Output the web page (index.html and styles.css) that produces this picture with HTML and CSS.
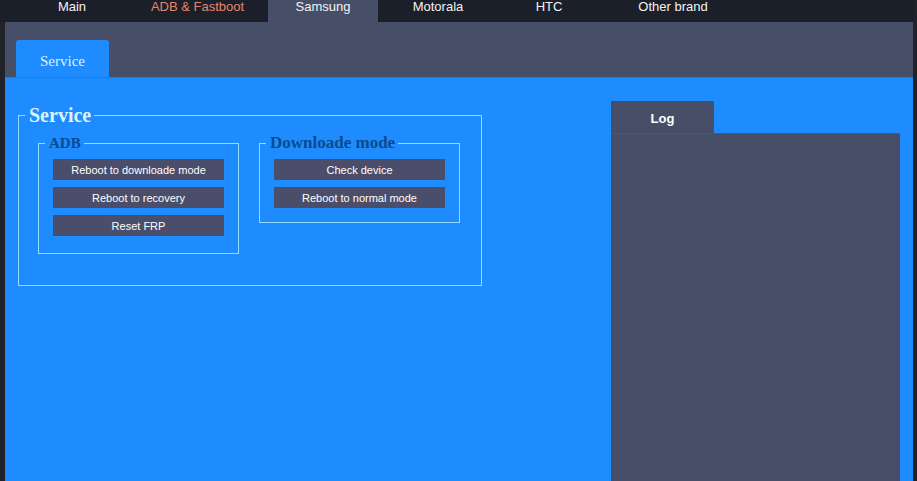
FILE: index.html
```html
<!DOCTYPE html>
<html lang="en">
<head>
  <meta charset="UTF-8" />
  <meta name="viewport" content="width=device-width, initial-scale=1.0" />
  <title>Samsung Service</title>
  <link rel="stylesheet" href="styles.css">
</head>
<body>
  <!-- Brand tabs -->
  <div class="tabbar">
    <div class="tab tab-main">Main</div>
    <div class="tab tab-adb">ADB &amp; Fastboot</div>
    <div class="tab tab-samsung active">Samsung</div>
    <div class="tab tab-moto">Motorala</div>
    <div class="tab tab-htc">HTC</div>
    <div class="tab tab-other">Other brand</div>
  </div>

  <div class="page">
    <div class="subtabs">
      <div class="subtab">Service</div>
    </div>

    <div class="panel">
      <!-- Service group -->
      <div class="group group-service">
        <span class="legend legend-big">Service</span>

        <div class="group group-small group-adb">
          <span class="legend legend-dark">ADB</span>
          <button class="btn">Reboot to downloade mode</button>
          <button class="btn">Reboot to recovery</button>
          <button class="btn">Reset FRP</button>
        </div>

        <div class="group group-small group-dl">
          <span class="legend legend-dark legend-wide">Downloade mode</span>
          <button class="btn">Check device</button>
          <button class="btn">Reboot to normal mode</button>
        </div>
      </div>

      <!-- Log -->
      <div class="log">
        <div class="log-tab">Log</div>
        <div class="log-body"></div>
      </div>
    </div>
  </div>
</body>
</html>
```

FILE: styles.css
```css
*, *::before, *::after {
  box-sizing: border-box;
}
body {
  margin: 0;
  height: 481px;
  overflow: hidden;
  font-family: 'Liberation Sans', Arial, sans-serif;
  background-color: #202429;
  color: #fff;
}
.tabbar {
  display: flex;
  width: 913px;
  height: 22px;
  padding-left: 5px;
  background-color: #1b1f2a;
}
.tab {
  height: 22px;
  font-size: 13px;
  line-height: 14px;
  text-align: center;
  color: #f2f2f2;
}
.tab-main { width: 134px; }
.tab-adb { width: 117px; color: #e4866c; }
.tab-samsung { width: 110px; margin-left: 12px; }
.tab-moto { width: 120px; }
.tab-htc { width: 102px; }
.tab-other { width: 146px; }
.tab.active {
  background-color: #474e68;
}
.page {
  display: flex;
  flex-direction: column;
  width: 908px;
  height: 459px;
  margin-left: 5px;
  background-color: #474e68;
}
.subtabs {
  display: flex;
  align-items: flex-end;
  height: 55px;
  padding-left: 11px;
}
.subtab {
  width: 93px;
  height: 37px;
  line-height: 42px;
  text-align: center;
  font-family: 'Liberation Serif', 'Times New Roman', serif;
  font-size: 15px;
  color: #d8f2ff;
  background-color: #1e8cff;
  border-radius: 3px 3px 0 0;
}
.panel {
  flex: 1;
  display: flex;
  align-items: flex-start;
  background-color: #1e8cff;
  border-top: 1px solid #2b7bd6;
}
.group {
  position: relative;
  border: 1px solid #92dcff;
}
.group-service {
  display: flex;
  align-items: flex-start;
  gap: 20px;
  width: 464px;
  height: 171px;
  margin: 37px 0 0 13px;
  padding: 27px 0 0 19px;
}
.group-small {
  display: flex;
  flex-direction: column;
  gap: 7px;
  width: 201px;
  padding: 15px 14px 17px;
}
.group-dl {
  padding-bottom: 14px;
}
.legend {
  position: absolute;
  left: 6px;
  padding: 0 3px 0 4px;
  background-color: #1e8cff;
  font-family: 'Liberation Serif', 'Times New Roman', serif;
  font-weight: bold;
  white-space: nowrap;
}
.legend-big {
  top: -13px;
  font-size: 20px;
  line-height: 24px;
  color: #dcf4ff;
}
.legend-dark {
  top: -10px;
  font-size: 15px;
  line-height: 18px;
  color: #0a4a8e;
}
.legend-wide {
  font-size: 17px;
  top: -11px;
  line-height: 20px;
}
.btn {
  width: 171px;
  height: 21px;
  padding: 0;
  border: none;
  font-family: 'Liberation Sans', Arial, sans-serif;
  font-size: 11px;
  color: #fff;
  background-color: #4a4e6a;
  cursor: pointer;
}
.btn:hover {
  background-color: #565b7a;
}
.log {
  display: flex;
  flex-direction: column;
  align-self: stretch;
  width: 289px;
  margin: 23px 13px 0 auto;
}
.log-tab {
  width: 103px;
  height: 33px;
  padding-top: 10px;
  text-align: center;
  font-size: 13px;
  font-weight: bold;
  background-color: #474e68;
}
.log-body {
  flex: 1;
  background-color: #474e68;
  border-top: 1px solid #3e5a8a;
  margin-top: -1px;
}
```
